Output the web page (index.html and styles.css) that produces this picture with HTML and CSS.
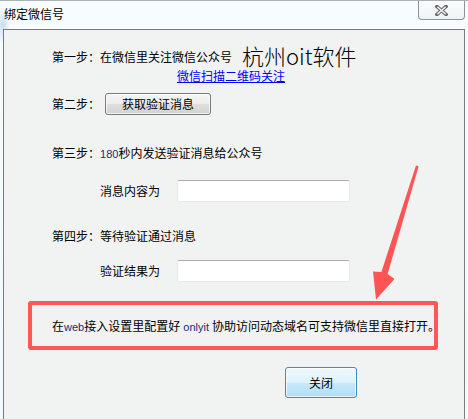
FILE: index.html
```html
<!DOCTYPE html>
<html lang="zh-CN">
<head>
<meta charset="utf-8">
<title>绑定微信号</title>
<link rel="stylesheet" href="styles.css">
</head>
<body>
<div class="window">
  <div class="titlebar">
    <div class="title">绑定微信号</div>
    <div class="close-x">
      <svg width="13" height="11" viewBox="0 0 13 11">
        <path d="M2 1.5 L11 9.5 M11 1.5 L2 9.5" stroke="#6a6a6a" stroke-width="3.6" stroke-linecap="square" fill="none"/>
        <path d="M2.4 1.9 L10.6 9.1 M10.6 1.9 L2.4 9.1" stroke="#ececec" stroke-width="1.4" stroke-linecap="butt" fill="none"/>
      </svg>
    </div>
  </div>
  <div class="panel">
    <div class="row row1">
      <span class="step1">第一步：在微信里关注微信公众号</span>
      <span class="brand">杭州oit软件</span>
    </div>
    <a class="qr-link" href="#">微信扫描二维码关注</a>
    <div class="row row2">
      <span class="line">第二步：</span>
      <button class="btn">获取验证消息</button>
    </div>
    <div class="line step3">第三步：<span class="latin">180</span>秒内发送验证消息给公众号</div>
    <div class="row field">
      <span class="label">消息内容为</span>
      <input class="input" type="text">
    </div>
    <div class="line step4">第四步：等待验证通过消息</div>
    <div class="row field field2">
      <span class="label">验证结果为</span>
      <input class="input" type="text">
    </div>
    <div class="notice">在<span class="latin">web</span>接入设置里配置好<span class="latin"> onlyit </span>协助访问动态域名可支持微信里直接打开。</div>
    <button class="btn-close">关闭</button>
  </div>
  <svg class="arrow" width="468" height="419" viewBox="0 0 468 419">
    <polygon points="416,164.5 418.6,165.3 387.6,273 394.5,278 376,298.5 373,270.5 381.4,271" fill="#ff5454"/>
  </svg>
</div>
</body>
</html>
```

FILE: styles.css
```css
* { box-sizing: border-box; }

html, body {
  margin: 0;
  padding: 0;
}

body {
  font-family: "Noto Sans CJK SC", "Noto Sans", sans-serif;
  font-size: 12px;
  color: #000;
  background: #f4fbfd;
}

.window {
  position: relative;
  width: 468px;
  height: 419px;
  overflow: hidden;
  background:
    radial-gradient(ellipse 7px 18px at 3px 24px, rgba(110, 160, 215, 0.35), rgba(110, 160, 215, 0) 100%),
    linear-gradient(#f7fcfe, #f2fafd);
  border-top: 1px solid #a9b1b5;
}

.titlebar {
  display: flex;
  align-items: flex-start;
  height: 28px;
}

.title {
  margin-top: 7px;
  padding-left: 4px;
  line-height: 12px;
  color: #000;
}

.close-x {
  margin-left: auto;
  margin-right: 3px;
  margin-top: -1px;
  width: 47px;
  height: 20px;
  border: 1px solid #8e9397;
  border-top: none;
  border-radius: 0 0 4px 4px;
  background: linear-gradient(#fbfdfe, #eef3f5);
  display: flex;
  align-items: center;
  justify-content: center;
  padding-top: 1px;
}

.close-x svg { display: block; }

.panel {
  margin: 0 3px;
  height: 390px;
  border: 1px solid #7a7a7a;
  border-bottom: none;
  background: #f1f2f2;
  padding-left: 48px;
  padding-top: 15px;
}

.row {
  display: flex;
}

.line {
  line-height: 12px;
}

.row1 {
  align-items: flex-start;
  height: 22px;
}

.step1 {
  margin-top: 6px;
  line-height: 12px;
  white-space: nowrap;
}

.brand {
  margin-left: 10px;
  font-size: 22px;
  font-weight: 300;
  line-height: 20px;
  white-space: nowrap;
}

.qr-link {
  display: block;
  width: max-content;
  margin-left: 125px;
  margin-top: 3px;
  line-height: 12px;
  color: #0000ff;
  text-decoration: underline;
}

.row2 {
  margin-top: 11px;
  height: 22px;
  align-items: center;
}

.btn {
  margin-left: 5px;
  width: 106px;
  height: 22px;
  padding: 0;
  font-family: inherit;
  font-size: 12px;
  line-height: 12px;
  color: #000;
  border: 1px solid #7a7a7a;
  border-radius: 3px;
  background: linear-gradient(#f4f4f4 0%, #ededed 50%, #dedede 51%, #d2d2d2 100%);
  box-shadow: inset 0 0 0 1px rgba(255, 255, 255, 0.7);
}

.step3 {
  margin-top: 32px;
}

.latin {
  font-family: "Liberation Sans", Arial, sans-serif;
  font-size: 11px;
  color: #1e2a80;
  white-space: pre;
}

.field {
  margin-top: 20px;
  height: 22px;
  align-items: center;
}

.field2 {
  margin-top: 18px;
}

.label {
  margin-left: 48px;
  width: 77px;
  line-height: 12px;
}

.input {
  width: 173px;
  height: 22px;
  margin: 0;
  border: 1px solid #e3e9ef;
  border-top-color: #abadb3;
  border-radius: 2px;
  background: #fff;
}

.step4 {
  margin-top: 28px;
}

.notice {
  margin-left: -24px;
  margin-top: 19px;
  width: 410px;
  height: 49px;
  border: 4px solid #ff5656;
  border-radius: 3px;
  padding: 15px 0 0 20px;
  line-height: 12px;
  white-space: nowrap;
}

.btn-close {
  display: block;
  margin-left: 233px;
  margin-top: 17px;
  width: 72px;
  height: 31px;
  padding: 0;
  font-family: inherit;
  font-size: 12px;
  color: #000;
  border: 1px solid #3c8cc4;
  border-radius: 3px;
  background: linear-gradient(#eef8fe 0%, #dff2fd 50%, #c6e9fc 51%, #b0def7 100%);
  box-shadow: inset 0 0 0 1px rgba(255, 255, 255, 0.75);
}

.arrow {
  position: absolute;
  left: 0;
  top: 0;
  pointer-events: none;
}
```
